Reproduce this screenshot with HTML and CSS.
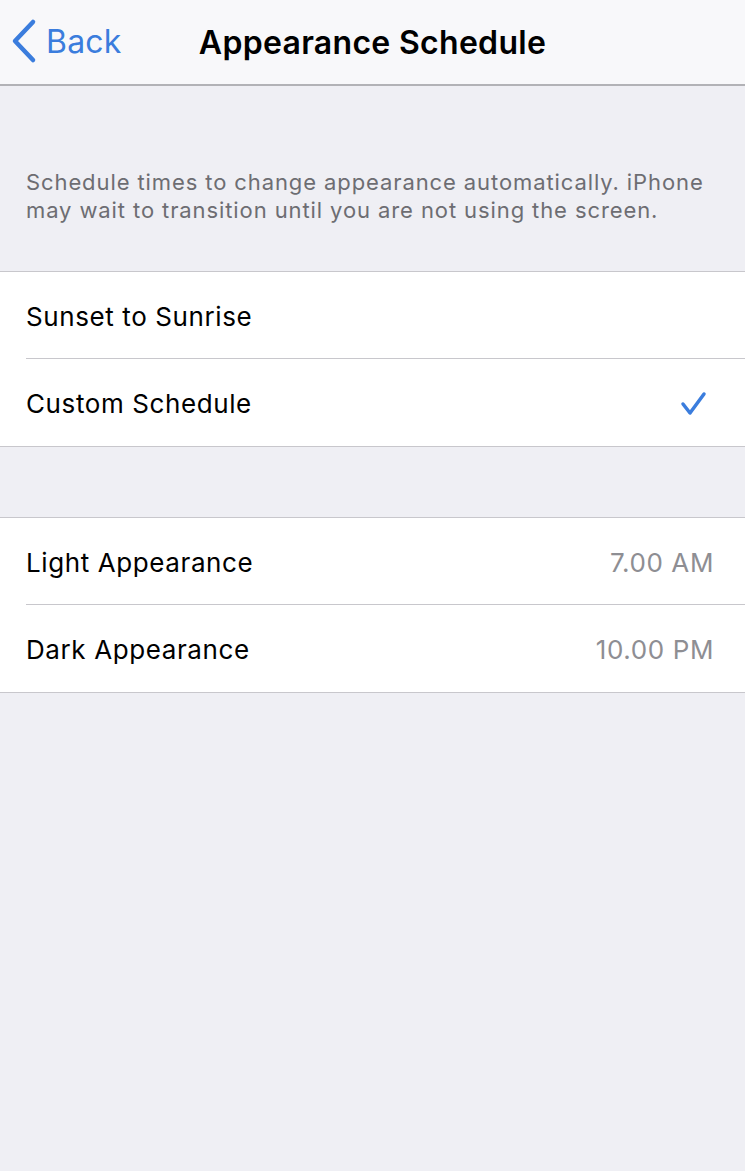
FILE: index.html
```html
<!DOCTYPE html>
<html lang="en">
<head>
  <meta charset="UTF-8" />
  <meta name="viewport" content="width=device-width, initial-scale=1.0"/>
  <title>Appearance Schedule</title>
  <link rel="stylesheet" href="styles.css">
</head>
<body>

  <div class="navBar">
    <a class="backButton" href="#">
      <svg class="chevron" width="30" height="46" viewBox="0 0 30 46">
        <path d="M23 4 L5 23 L23 42" fill="none" stroke="currentColor" stroke-width="4.5" stroke-linecap="round" stroke-linejoin="round"/>
      </svg>
      <span>Back</span>
    </a>
    <h1 class="navTitle">Appearance Schedule</h1>
  </div>

  <p class="groupHeader">Schedule times to change appearance automatically. iPhone may wait to transition until you are not using the screen.</p>

  <div class="group">
    <div class="row">
      <span class="label">Sunset to Sunrise</span>
    </div>
    <div class="row">
      <span class="label">Custom Schedule</span>
      <svg class="check" width="28" height="26" viewBox="0 0 28 26">
        <path d="M3 13 L10 22 L24 3" fill="none" stroke="currentColor" stroke-width="3.5" stroke-linecap="round" stroke-linejoin="round"/>
      </svg>
    </div>
  </div>

  <div class="group second">
    <div class="row">
      <span class="label">Light Appearance</span>
      <span class="value">7.00 AM</span>
    </div>
    <div class="row">
      <span class="label">Dark Appearance</span>
      <span class="value">10.00 PM</span>
    </div>
  </div>

</body>
</html>
```

FILE: styles.css
```css
body {
  margin: 0;
  padding: 0;
  font-family: Inter, 'Noto Sans', sans-serif;
  background: #efeff4;
  color: #000;
  min-height: 1171px;
}

.navBar {
  position: relative;
  height: 84px;
  background: #f8f8fa;
  border-bottom: 2px solid #b2b2b6;
  display: flex;
  align-items: center;
  justify-content: center;
}

.backButton {
  position: absolute;
  left: 10px;
  top: 18px;
  display: flex;
  align-items: center;
  gap: 6px;
  color: #3b7ddd;
  text-decoration: none;
  font-size: 32px;
  letter-spacing: 0.2px;
}

.navTitle {
  margin: 0;
  font-size: 32px;
  font-weight: 600;
  letter-spacing: 0.3px;
}

.groupHeader {
  margin: 0;
  padding: 82px 26px 47px;
  font-size: 22px;
  line-height: 28px;
  letter-spacing: 0.9px;
  color: #6d6d72;
}

.group {
  background: #fff;
  border-top: 1px solid #c8c7cc;
  border-bottom: 1px solid #c8c7cc;
  padding-left: 26px;
}

.group.second {
  margin-top: 70px;
}

.row {
  height: 86px;
  display: flex;
  align-items: center;
  justify-content: space-between;
  padding-right: 31px;
  font-size: 26px;
  letter-spacing: 0.6px;
  padding-top: 2px;
  box-sizing: border-box;
}

.row + .row {
  border-top: 1px solid #c8c7cc;
  height: 88px;
}

.check {
  color: #3b7ddd;
  margin-right: 6px;
}

.value {
  color: #8e8e93;
}
```
